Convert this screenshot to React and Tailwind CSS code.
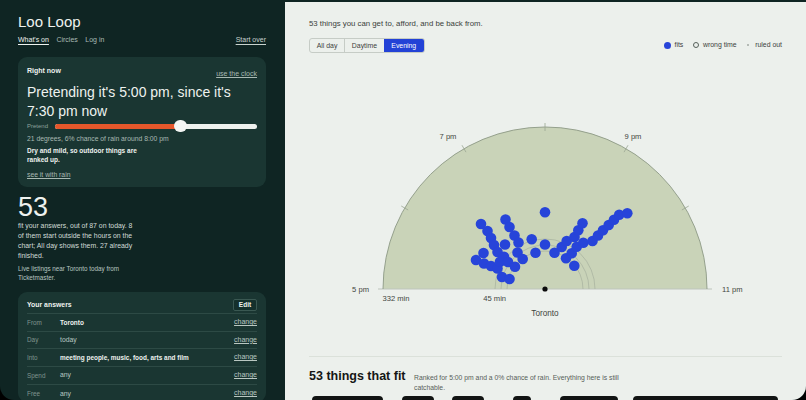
import React from "react";

const dots = [
  [481, 224], [487.5, 231], [491, 238], [494, 245], [497.5, 252], [483.5, 253], [476, 260],
  [484, 263.5], [491, 266], [497.5, 268.5], [502, 277], [509.5, 279], [505.5, 219.5],
  [509.5, 227], [514.5, 235.5], [518.5, 242.5], [505, 244.5], [517.5, 252.5], [522.7, 259],
  [504, 256.7], [500, 261.7], [508, 262], [515, 266.7], [531.7, 239.3], [535.5, 252.7],
  [545, 212.3], [545, 244.5], [554.5, 252.7], [561.7, 247], [566.7, 241], [574.5, 237],
  [578.3, 230.3], [582.5, 223.3], [566, 258.3], [571.7, 253.3], [576.7, 246.7], [583.3, 242.7],
  [574.3, 265.7], [592.5, 241], [598, 235.5], [603, 230.3], [608.7, 225], [614, 219.7],
  [619.2, 214.7], [627.3, 213.2],
];

const CX = 545;
const CY = 289;
const R = 162;

function Chart() {
  const ticks = [150, 120, 90, 60, 30].map((deg) => {
    const a = (deg * Math.PI) / 180;
    return {
      x1: CX + 158 * Math.cos(a),
      y1: CY - 158 * Math.sin(a),
      x2: CX + 166 * Math.cos(a),
      y2: CY - 166 * Math.sin(a),
    };
  });
  const lbl = { fontSize: 7.6, fill: "#3f4540", fontFamily: "'Liberation Sans', Arial, sans-serif" };
  return (
    <svg width="473" height="290" viewBox="309 60 473 290" className="block">
      <path d={`M${CX - R} ${CY} A${R} ${R} 0 0 1 ${CX + R} ${CY} Z`} fill="#c9d3b8" />
      <line x1="378" y1={CY} x2="712" y2={CY} stroke="#bdc4bc" strokeWidth="1" />
      <path d={`M${CX - R} ${CY} A${R} ${R} 0 0 1 ${CX + R} ${CY}`} fill="none" stroke="#8c9985" strokeWidth="0.9" />
      {[38, 44, 50].map((r) => (
        <path key={r} d={`M${CX - r} ${CY} A${r} ${r} 0 0 1 ${CX + r} ${CY}`} fill="none" stroke="#a6b09e" strokeWidth="0.7" />
      ))}
      {ticks.map((t, i) => (
        <line key={i} {...t} stroke="#9aa693" strokeWidth="0.8" />
      ))}
      <text x="448" y="136" textAnchor="middle" dominantBaseline="central" style={lbl}>7 pm</text>
      <text x="633" y="136" textAnchor="middle" dominantBaseline="central" style={lbl}>9 pm</text>
      <text x="369" y="289" textAnchor="end" dominantBaseline="central" style={lbl}>5 pm</text>
      <text x="722" y="289" textAnchor="start" dominantBaseline="central" style={lbl}>11 pm</text>
      <text x="396" y="298.5" textAnchor="middle" dominantBaseline="central" style={lbl}>332 min</text>
      <text x="494.7" y="298.5" textAnchor="middle" dominantBaseline="central" style={lbl}>45 min</text>
      <text x="545" y="313" textAnchor="middle" dominantBaseline="central" style={{ ...lbl, fontSize: 8.2 }}>Toronto</text>
      {dots.map(([x, y], i) => (
        <circle key={i} cx={x} cy={y} r="5.3" fill="#2744d9" />
      ))}
      <circle cx={CX} cy={CY} r="2.6" fill="#0b0b0b" />
    </svg>
  );
}

function AnswerRow({ label, value, strong, last }) {
  return (
    <div className={`flex h-[17.7px] items-center ${last ? "" : "border-b border-[#2d4a45]"}`}>
      <div className="w-[33px] text-[6.4px] text-[#7f948e]">{label}</div>
      <div className={`flex-1 ${strong ? "text-[6.45px] font-bold text-[#eef2ef]" : "text-[6.8px] text-[#b9c7c2]"}`}>{value}</div>
      <div className="text-[7px] text-[#b9c7c2] underline underline-offset-1">change</div>
    </div>
  );
}

export default function App() {
  return (
    <div className="h-[400px] w-[806px] overflow-hidden bg-black [font-family:'Liberation_Sans',Arial,sans-serif]">
      <div className="flex h-[400px] overflow-hidden rounded-b-[14px] bg-[#0f2523]">
        <aside className="w-[285px] shrink-0 pl-[18px] pr-[19px] pt-[13px] text-[#eef2ef]">
          <div className="text-[15px] leading-[18px]">Loo Loop</div>
          <nav className="mt-[4px] flex items-center text-[7px] leading-[10px]">
            <span className="text-[#eef2ef] underline underline-offset-2">What's on</span>
            <span className="ml-[7.5px] text-[#a9bab4]">Circles</span>
            <span className="ml-[7.5px] text-[#a9bab4]">Log in</span>
            <span className="ml-auto text-[#c9d3cf] underline underline-offset-2">Start over</span>
          </nav>

          <section className="mt-[12px] rounded-[9px] bg-[#1a3632] px-[9px] pt-[9px] pb-[8px]">
            <div className="flex items-start justify-between">
              <div className="text-[7px] font-bold leading-[10px]">Right now</div>
              <div className="mt-[3px] text-[7px] leading-[10px] text-[#a9bab4] underline underline-offset-1">use the clock</div>
            </div>
            <div className="mt-[4px] text-[14px] leading-[18.5px]">Pretending it's 5:00 pm, since it's 7:30 pm now</div>
            <div className="mt-[0.5px] flex h-[12px] items-center">
              <div className="w-[28px] text-[6px] text-[#8ea29c]">Pretend</div>
              <div className="relative h-[4.5px] flex-1 rounded-full bg-[#eef1ee]">
                <div className="h-full w-[125px] rounded-full bg-[#e5572b]" />
                <div className="absolute left-[118.5px] top-[-3.8px] h-[12px] w-[13px] rounded-full bg-[#f3f5f3]" />
              </div>
            </div>
            <div className="mt-[1px] text-[6.8px] leading-[9px] text-[#a9b9b3]">21 degrees, 6% chance of rain around 8:00 pm</div>
            <div className="mt-[3px] w-[125px] text-[6.5px] font-bold leading-[9.5px]">Dry and mild, so outdoor things are ranked up.</div>
            <div className="mt-[5px] text-[6.8px] leading-[9px] text-[#a9b9b3] underline underline-offset-1">see it with rain</div>
          </section>

          <div className="mt-[6.5px] text-[27px] leading-[28px]">53</div>
          <div className="w-[119px] text-[6.9px] leading-[10px] text-[#d2dcd8]">
            fit your answers, out of 87 on today. 8 of them start outside the hours on the chart; All day shows them. 27 already finished.
          </div>
          <div className="mt-[2.5px] w-[119px] text-[6.3px] leading-[9px] text-[#b8c6c1]">Live listings near Toronto today from Ticketmaster.</div>

          <section className="mt-[10.5px] rounded-[9px] bg-[#1a3632] px-[9px]">
            <div className="flex items-center justify-between border-b border-[#2d4a45] pt-[7px] pb-[2px]">
              <div className="text-[6.9px] font-bold">Your answers</div>
              <div className="flex h-[12px] w-[24px] items-center justify-center rounded-[2px] border border-[#3a5852] bg-[#14302c] text-[6.5px] font-bold">Edit</div>
            </div>
            <AnswerRow label="From" value="Toronto" strong />
            <AnswerRow label="Day" value="today" />
            <AnswerRow label="Into" value="meeting people, music, food, arts and film" strong />
            <AnswerRow label="Spend" value="any" />
            <AnswerRow label="Free" value="any" last />
          </section>
        </aside>

        <main className="mt-[2px] flex-1 bg-[#ecf0ec] px-[24px] pt-[17px] text-[#3a3f3b]">
          <p className="text-[7.8px] leading-[10px]">53 things you can get to, afford, and be back from.</p>
          <div className="mt-[9px] flex h-[15px] items-center justify-between">
            <div className="flex h-[15px] overflow-hidden rounded-[3px] border border-[#c6ccc6] text-[6.9px] leading-[13px]">
              <div className="w-[34px] text-center text-[#3d423e]">All day</div>
              <div className="w-[40px] border-l border-[#c6ccc6] text-center text-[#3d423e]">Daytime</div>
              <div className="w-[39.5px] bg-[#2342d6] text-center text-white">Evening</div>
            </div>
            <div className="flex items-center text-[6.9px] text-[#3c413d]">
              <span className="h-[6.6px] w-[6.6px] rounded-full bg-[#2744d9]" />
              <span className="ml-[3.4px]">fits</span>
              <span className="ml-[9.7px] h-[6px] w-[6px] rounded-full border border-[#56615b]" />
              <span className="ml-[4px]">wrong time</span>
              <span className="ml-[10.5px] h-[2px] w-[2px] rounded-full bg-[#a3aaa4]" />
              <span className="ml-[6px]">ruled out</span>
            </div>
          </div>

          <div className="mt-[7px]">
            <Chart />
          </div>

          <div className="mt-[5.7px] border-t border-[#dbe1da]" />

          <div className="mt-[11.5px] flex items-baseline">
            <h2 className="text-[12.5px] font-bold leading-[16px] text-[#141615]">53 things that fit</h2>
            <p className="ml-[8.5px] w-[215px] text-[6.8px] leading-[9.6px] text-[#575e59]">
              Ranked for 5:00 pm and a 0% chance of rain. Everything here is still catchable.
            </p>
          </div>

          <div className="mt-[4px] flex">
            <div className="ml-[2.7px] h-[12px] w-[71.6px] rounded-[4px] bg-[#121413]" />
            <div className="ml-[18.7px] h-[12px] w-[32px] rounded-[4px] bg-[#121413]" />
            <div className="ml-[17.7px] h-[12px] w-[32.6px] rounded-[4px] bg-[#121413]" />
            <div className="ml-[28.4px] h-[12px] w-[18.3px] rounded-[4px] bg-[#121413]" />
            <div className="ml-[29px] h-[12px] w-[58.3px] rounded-[4px] bg-[#121413]" />
            <div className="ml-[15px] h-[12px] w-[145px] rounded-[4px] bg-[#121413]" />
          </div>
        </main>
      </div>
    </div>
  );
}
